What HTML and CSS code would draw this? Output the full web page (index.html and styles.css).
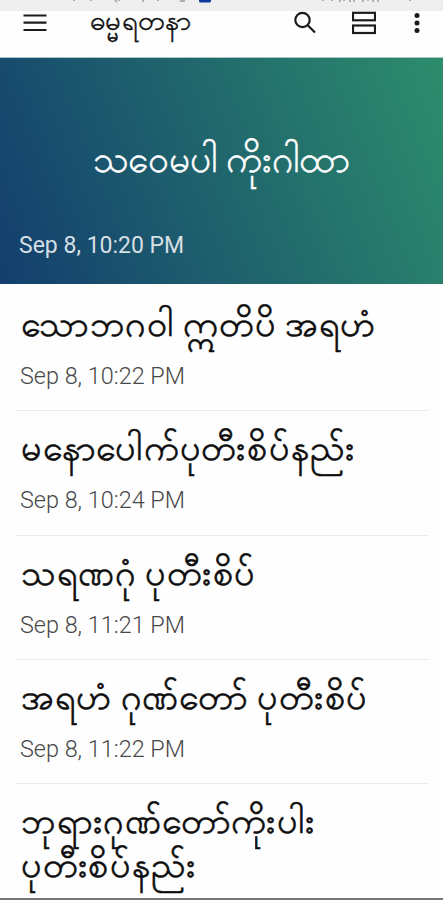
FILE: index.html
```
<!DOCTYPE html>
<html lang="my">
<head>
    <meta charset="UTF-8">
    <meta name="viewport" content="width=device-width, initial-scale=1.0">
    <title>ဓမ္မရတနာ</title>
    <link rel="stylesheet" href="styles.css">
</head>
<body>
    <div class="status-bar">
        <svg width="443" height="11" viewBox="0 0 443 11">
            <path class="marks" d="M74 0v1M91 0v1M115 0l2 2M119 0v1M143 0v2M158 0v1M180 1h5M323 0v1M332 0v1M340 0v2M344 0v1M350 0v2M354 0v2M363 0v2M368 0v1M373 0v2M378 0v2M410 0v1"/>
            <rect class="app-dot" x="199" y="-3" width="12" height="5.5" rx="1.5"/>
        </svg>
    </div>
    <header class="toolbar">
        <svg class="icon menu" width="24" height="18" viewBox="0 0 24 18"><path d="M.5 1.500h23M.5 8.700h23M.5 16h23"/></svg>
        <h1>ဓမ္မရတနာ</h1>
        <svg class="icon search" width="24" height="24" viewBox="0 0 24 24"><circle cx="9.500" cy="9" r="7.200"/><path d="M14.500 14l7.500 7.500"/></svg>
        <svg class="icon layout" width="24" height="24" viewBox="0 0 24 24"><rect x="1" y="1.800" width="22" height="7.500"/><rect x="1" y="14.500" width="22" height="7.500"/></svg>
        <svg class="dots" width="6" height="24" viewBox="0 0 6 24"><circle cx="3" cy="4.500" r="2.500"/><circle cx="3" cy="11.900" r="2.500"/><circle cx="3" cy="19.500" r="2.500"/></svg>
    </header>
    <section class="hero">
        <h2>သဝေမပါ ကိုးဂါထာ</h2>
        <time>Sep 8, 10:20 PM</time>
    </section>
    <ul class="posts">
        <li>
            <h3>သောဘဂဝါ ဣတိပိ အရဟံ</h3>
            <time>Sep 8, 10:22 PM</time>
        </li>
        <li>
            <h3>မနောပေါက်ပုတီးစိပ်နည်း</h3>
            <time>Sep 8, 10:24 PM</time>
        </li>
        <li>
            <h3>သရဏဂုံ ပုတီးစိပ်</h3>
            <time>Sep 8, 11:21 PM</time>
        </li>
        <li>
            <h3>အရဟံ ဂုဏ်တော် ပုတီးစိပ်</h3>
            <time>Sep 8, 11:22 PM</time>
        </li>
        <li>
            <h3>ဘုရားဂုဏ်တော်ကိုးပါး<br>ပုတီးစိပ်နည်း</h3>
        </li>
    </ul>
</body>
</html>
```
FILE: styles.css
```
* {
    box-sizing: border-box;
}
body {
    margin: 0;
    height: 900px;
    display: flex;
    flex-direction: column;
    overflow: hidden;
    background: #fefefe;
    color: #0c0c0c;
    font-family: Roboto, "Noto Sans", sans-serif;
}
h1, h2, h3 {
    margin: 0;
    font-weight: 400;
    white-space: nowrap;
}
.status-bar {
    flex: none;
    height: 11px;
    background: #eee;
}
.status-bar svg {
    display: block;
}
.marks {
    stroke: #999;
    stroke-width: 1.5;
    fill: none;
}
.app-dot {
    fill: #0c389c;
}
.toolbar {
    flex: none;
    display: flex;
    align-items: flex-start;
    height: 46px;
    padding: 0 23px;
}
.toolbar h1 {
    width: 203px;
    margin-left: 43px;
    font-size: 27.5px;
    line-height: 20px;
    letter-spacing: 0.4px;
    -webkit-text-stroke: 0.4px #0c0c0c;
}
.icon {
    flex: none;
    fill: none;
    stroke: #1c1c1c;
    stroke-width: 2.2;
}
.menu {
    margin-top: 3px;
}
.layout {
    margin-left: 35px;
}
.dots {
    flex: none;
    margin-left: 38px;
    fill: #1c1c1c;
}
.hero {
    flex: none;
    display: flex;
    flex-direction: column;
    height: 227px;
    padding: 80px 19px 0;
    border-top: 1px solid #a9c6c9;
    background: linear-gradient(68deg, #133e6e, #2d8d6c);
    color: #fff;
}
.hero h2 {
    font-size: 37px;
    line-height: 44px;
    text-align: center;
    -webkit-text-stroke: 0.4px #fff;
}
.hero time {
    margin-top: 50px;
    color: #d5dfe4;
    font-size: 23px;
    font-weight: 400;
}
time {
    display: block;
    color: #484848;
    font-size: 23.4px;
    font-weight: 300;
    line-height: 28px;
}
.posts {
    flex: 1;
    margin: 0;
    padding: 3px 14px 0 15px;
    list-style: none;
    border-bottom: 2px solid #777;
}
.posts li {
    height: 124.3px;
    padding: 15px 0 0 6px;
    border-bottom: 1px solid #ececec;
}
.posts li:last-child {
    height: auto;
    border-bottom: 0;
}
.posts h3 {
    font-size: 35.8px;
    line-height: 44px;
    letter-spacing: 0.7px;
    word-spacing: -1px;
    -webkit-text-stroke: 0.6px #0c0c0c;
}
.posts time {
    margin-top: 16px;
    margin-left: -1px;
}
```
